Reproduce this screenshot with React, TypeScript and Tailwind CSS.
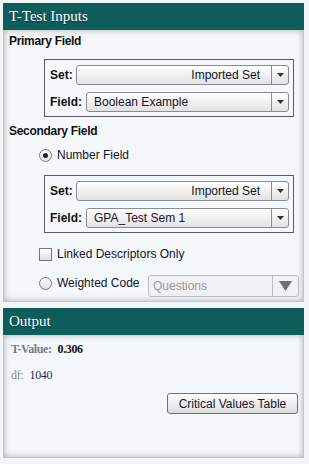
import React from 'react';

// petite flèche des listes déroulantes
function Caret({ big = false }: { big?: boolean }) {
    return big ? (
        <svg width="13" height="10" viewBox="0 0 13 10">
            <path d="M0 0h13L6.5 10z" fill="#6e6e6e" />
        </svg>
    ) : (
        <svg width="7" height="4" viewBox="0 0 7 4">
            <path d="M0 0h7L3.5 4z" fill="#333" />
        </svg>
    );
}

function Select({ value, right = false }: { value: string; right?: boolean }) {
    return (
        <div className="flex h-[20px] flex-1 rounded-[3px] border border-[#8c8c8c] bg-gradient-to-b from-white to-[#e2e2e2]">
            <div
                className={
                    right
                        ? 'flex-1 truncate pr-[11px] pl-[7px] text-right text-[12px] leading-[18px] text-[#141428]'
                        : 'flex-1 truncate pr-[11px] pl-[7px] text-left text-[12px] leading-[18px] text-[#141428]'
                }
            >
                {value}
            </div>
            <div className="flex w-[17px] items-center justify-center border-l border-[#8c8c8c]">
                <Caret />
            </div>
        </div>
    );
}

function FieldBox({ field }: { field: string }) {
    return (
        <div className="ml-[40px] flex w-[250px] flex-col gap-[7px] border border-[#5a5a5a] pt-[5px] pr-[4px] pb-[4px] pl-[5px]">
            <div className="flex items-center">
                <span className="w-[26px] text-[12px] font-bold text-[#111]">Set:</span>
                <Select value="Imported Set" right />
            </div>
            <div className="flex items-center">
                <span className="w-[36px] text-[12px] font-bold text-[#111]">Field:</span>
                <Select value={field} />
            </div>
        </div>
    );
}

function Radio({ checked = false }: { checked?: boolean }) {
    return (
        <div className="flex h-[13px] w-[13px] shrink-0 items-center justify-center rounded-full border border-[#7a7a7a] bg-gradient-to-b from-white to-[#e0e0e0]">
            {checked && <div className="h-[5px] w-[5px] rounded-full bg-[#222]" />}
        </div>
    );
}

function Header({ title }: { title: string }) {
    return (
        <div className="flex h-[27px] items-center bg-[#0d5d5b] pl-[6px] font-['Liberation_Serif',serif] text-[15px] text-white [text-shadow:0_1px_1px_rgba(0,0,0,0.45)]">
            {title}
        </div>
    );
}

export default function App() {
    return (
        <div className="min-h-screen w-[309px] bg-[#f3f6f9] p-[3px] font-['Liberation_Sans',Arial,sans-serif]">
            {/* --- T-Test Inputs --- */}
            <section className="w-[301px]">
                <Header title="T-Test Inputs" />
                <div className="flex h-[272px] flex-col border border-t-0 border-[#c2c5c9] bg-[#f5f8fb] pt-[4px] shadow-[inset_0_0_6px_rgba(0,0,0,0.3)]">
                    <div className="pl-[5px] text-[12px] leading-[14px] font-bold tracking-[-0.3px] text-[#111]">
                        Primary Field
                    </div>
                    <div className="mt-[11px]">
                        <FieldBox field="Boolean Example" />
                    </div>

                    <div className="mt-[7px] pl-[5px] text-[12px] leading-[14px] font-bold tracking-[-0.3px] text-[#111]">
                        Secondary Field
                    </div>
                    <div className="mt-[10px] ml-[35px] flex h-[14px] items-center gap-[5px] text-[12px] text-[#141428]">
                        <Radio checked />
                        <span>Number Field</span>
                    </div>
                    <div className="mt-[13px]">
                        <FieldBox field="GPA_Test Sem 1" />
                    </div>

                    <div className="mt-[14px] ml-[35px] flex h-[14px] items-center gap-[5px] text-[12px] text-[#141428]">
                        <div className="h-[13px] w-[13px] border border-[#7a7a7a] bg-gradient-to-b from-white to-[#e0e0e0]" />
                        <span>Linked Descriptors Only</span>
                    </div>

                    <div className="mt-[14px] flex items-start">
                        <div className="mt-[1px] ml-[35px] flex h-[14px] items-center gap-[5px] text-[12px] text-[#141428]">
                            <Radio />
                            <span>Weighted Code</span>
                        </div>
                        <div className="mr-[4px] ml-auto flex h-[22px] w-[151px] rounded-[3px] border border-[#bcbcbc] bg-[#eff1f3]">
                            <div className="flex-1 pl-[4px] text-[12px] leading-[20px] text-[#9a9a9a]">Questions</div>
                            <div className="flex w-[26px] items-center justify-center border-l border-[#bcbcbc]">
                                <Caret big />
                            </div>
                        </div>
                    </div>
                </div>
            </section>

            {/* --- Output --- */}
            <section className="mt-[6px] w-[301px]">
                <Header title="Output" />
                <div className="flex h-[123px] flex-col border border-t-0 border-[#c2c5c9] bg-[#f5f8fb] pt-[7px] pl-[7px] font-['Liberation_Serif',serif] shadow-[inset_0_0_6px_rgba(0,0,0,0.3)]">
                    <div className="flex gap-[6px] text-[12px] leading-[14px] font-bold tracking-[-0.4px]">
                        <span className="text-[#7a7a7a]">T-Value:</span>
                        <span className="text-[#111]">0.306</span>
                    </div>
                    <div className="mt-[12px] flex gap-[6px] text-[12px] leading-[14px] tracking-[-0.3px]">
                        <span className="text-[#8a8a8a]">df:</span>
                        <span className="text-[#1f2f55]">1040</span>
                    </div>
                    <div className="mt-[11px] flex justify-end pr-[5px]">
                        <button className="h-[21px] w-[131px] rounded-[3px] border border-[#707070] bg-gradient-to-b from-white to-[#dcdcdc] font-['Liberation_Sans',Arial,sans-serif] text-[12px] text-[#141428]">
                            Critical Values Table
                        </button>
                    </div>
                </div>
            </section>
        </div>
    );
}
